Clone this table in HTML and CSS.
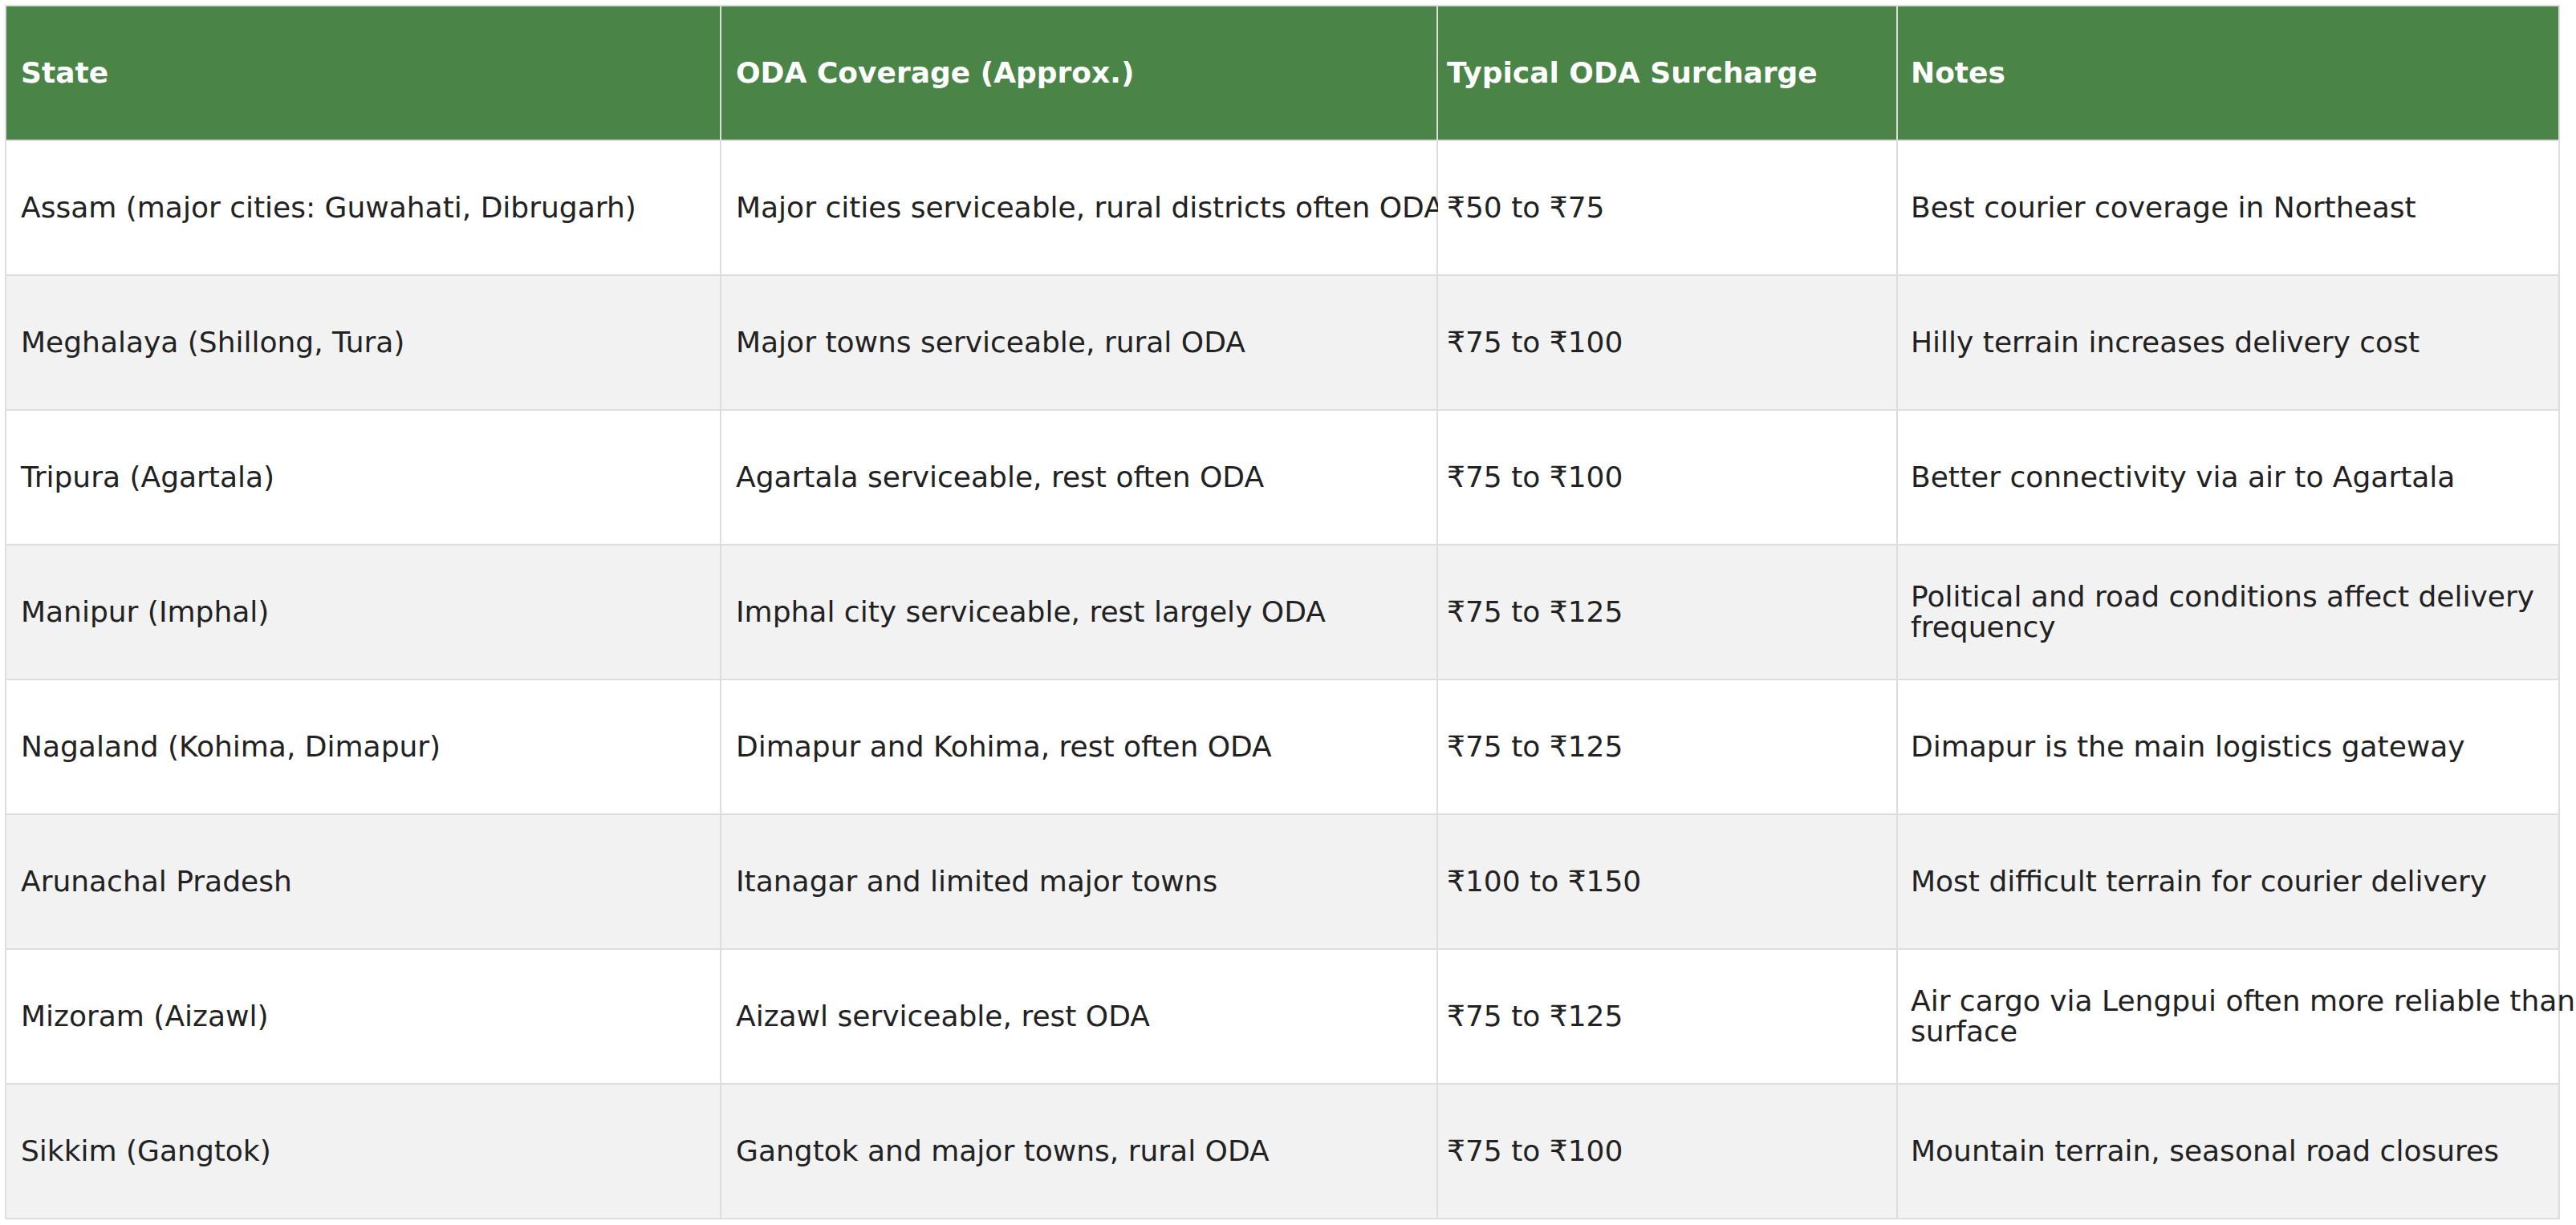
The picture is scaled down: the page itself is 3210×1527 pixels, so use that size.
FILE: index.html
```html
<!DOCTYPE html>
<html lang="en">
<head>
<meta charset="utf-8">
<title>ODA Coverage – Northeast India</title>
<link rel="stylesheet" href="styles.css">
</head>
<body>
<div class="table" role="table">
  <div class="row head" role="row">
    <div class="cell c1" role="columnheader"><span class="t">State</span></div>
    <div class="cell c2" role="columnheader"><span class="t">ODA Coverage (Approx.)</span></div>
    <div class="cell c3" role="columnheader"><span class="t">Typical ODA Surcharge</span></div>
    <div class="cell c4" role="columnheader"><span class="t">Notes</span></div>
  </div>
  <div class="row" role="row">
    <div class="cell c1" role="cell"><span class="t">Assam (major cities: Guwahati, Dibrugarh)</span></div>
    <div class="cell c2" role="cell"><span class="t">Major cities serviceable, rural districts often ODA</span></div>
    <div class="cell c3" role="cell"><span class="t">₹50 to ₹75</span></div>
    <div class="cell c4" role="cell"><span class="t">Best courier coverage in Northeast</span></div>
  </div>
  <div class="row alt" role="row">
    <div class="cell c1" role="cell"><span class="t">Meghalaya (Shillong, Tura)</span></div>
    <div class="cell c2" role="cell"><span class="t">Major towns serviceable, rural ODA</span></div>
    <div class="cell c3" role="cell"><span class="t">₹75 to ₹100</span></div>
    <div class="cell c4" role="cell"><span class="t">Hilly terrain increases delivery cost</span></div>
  </div>
  <div class="row" role="row">
    <div class="cell c1" role="cell"><span class="t">Tripura (Agartala)</span></div>
    <div class="cell c2" role="cell"><span class="t">Agartala serviceable, rest often ODA</span></div>
    <div class="cell c3" role="cell"><span class="t">₹75 to ₹100</span></div>
    <div class="cell c4" role="cell"><span class="t">Better connectivity via air to Agartala</span></div>
  </div>
  <div class="row alt" role="row">
    <div class="cell c1" role="cell"><span class="t">Manipur (Imphal)</span></div>
    <div class="cell c2" role="cell"><span class="t">Imphal city serviceable, rest largely ODA</span></div>
    <div class="cell c3" role="cell"><span class="t">₹75 to ₹125</span></div>
    <div class="cell c4" role="cell"><span class="t">Political and road conditions affect delivery frequency</span></div>
  </div>
  <div class="row" role="row">
    <div class="cell c1" role="cell"><span class="t">Nagaland (Kohima, Dimapur)</span></div>
    <div class="cell c2" role="cell"><span class="t">Dimapur and Kohima, rest often ODA</span></div>
    <div class="cell c3" role="cell"><span class="t">₹75 to ₹125</span></div>
    <div class="cell c4" role="cell"><span class="t">Dimapur is the main logistics gateway</span></div>
  </div>
  <div class="row alt" role="row">
    <div class="cell c1" role="cell"><span class="t">Arunachal Pradesh</span></div>
    <div class="cell c2" role="cell"><span class="t">Itanagar and limited major towns</span></div>
    <div class="cell c3" role="cell"><span class="t">₹100 to ₹150</span></div>
    <div class="cell c4" role="cell"><span class="t">Most difficult terrain for courier delivery</span></div>
  </div>
  <div class="row" role="row">
    <div class="cell c1" role="cell"><span class="t">Mizoram (Aizawl)</span></div>
    <div class="cell c2" role="cell"><span class="t">Aizawl serviceable, rest ODA</span></div>
    <div class="cell c3" role="cell"><span class="t">₹75 to ₹125</span></div>
    <div class="cell c4" role="cell"><span class="t">Air cargo via Lengpui often more reliable than surface</span></div>
  </div>
  <div class="row alt" role="row">
    <div class="cell c1" role="cell"><span class="t">Sikkim (Gangtok)</span></div>
    <div class="cell c2" role="cell"><span class="t">Gangtok and major towns, rural ODA</span></div>
    <div class="cell c3" role="cell"><span class="t">₹75 to ₹100</span></div>
    <div class="cell c4" role="cell"><span class="t">Mountain terrain, seasonal road closures</span></div>
  </div>
</div>
</body>
</html>
```

FILE: styles.css
```css
html, body {
  background: #ffffff;
}
body {
  margin: 6px 0 0 6px;
  font-family: "DejaVu Sans", Verdana, sans-serif;
  font-size: 36px;
  line-height: 38px;
  color: #222222;
}
.table {
  display: grid;
  grid-template-columns: 891px 893px 573px 825px;
  width: max-content;
  border-left: 2px solid #dddddd;
  border-top: 2px solid #dddddd;
}
.row {
  display: contents;
}
.cell {
  box-sizing: border-box;
  height: 168px;
  display: flex;
  align-items: center;
  padding-left: 18px;
  border-right: 2px solid #dddddd;
  border-bottom: 2px solid #dddddd;
  background: #ffffff;
  min-width: 0;
}
.cell.c3 {
  padding-left: 11px;
}
.cell.c4 {
  padding-left: 16px;
}
.t {
  margin-right: -24px;
}
.row.alt .cell {
  background: #f2f2f2;
}
.row.head .cell {
  background: #4a8547;
  color: #ffffff;
  font-weight: bold;
}
```
